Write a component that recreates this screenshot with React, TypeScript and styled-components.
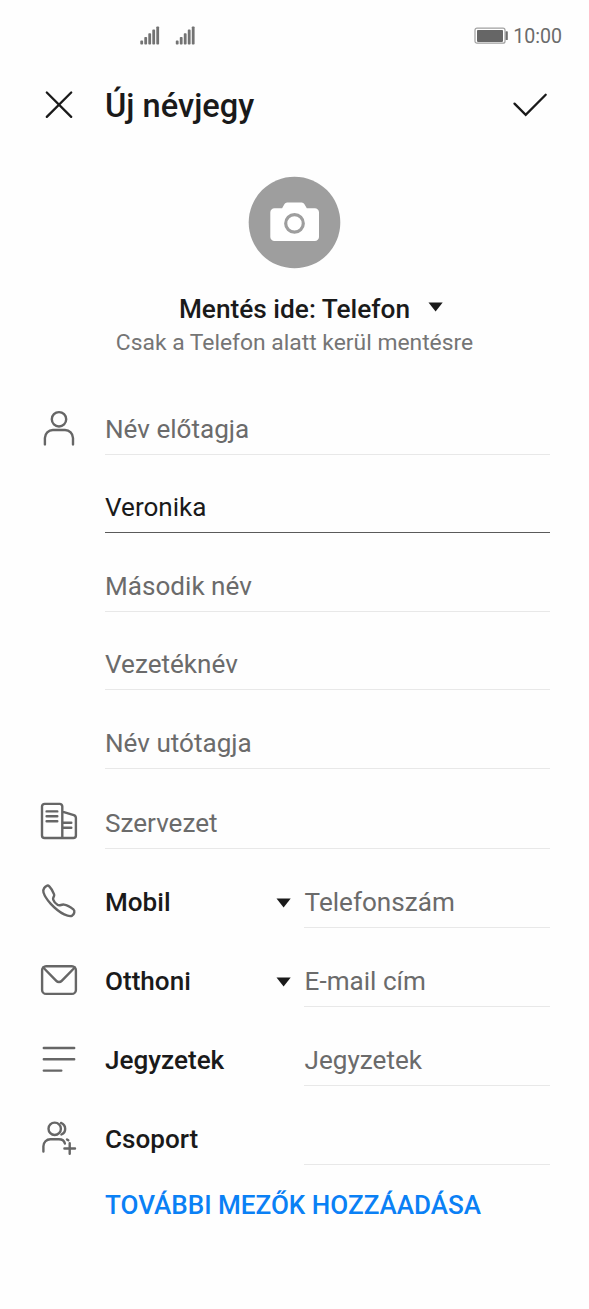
import React from "react";
import styled, { createGlobalStyle } from "styled-components";

const GlobalStyle = createGlobalStyle`
  * { box-sizing: border-box; }
  body { margin: 0; background: #fefefe; }
`;

const Screen = styled.main`
  display: flex;
  flex-direction: column;
  width: 589px;
  height: 1309px;
  background: #fefefe;
  color: #1a1a1a;
  font-family: Roboto, "Liberation Sans", sans-serif;
  overflow: hidden;
`;

const StatusBar = styled.div`
  display: flex;
  align-items: center;
  justify-content: space-between;
  height: 72px;
  padding: 0 27px 0 140px;
`;

const StatusRight = styled.div`
  display: flex;
  align-items: center;
  gap: 5px;
`;

const Clock = styled.span`
  padding-top: 1px;
  font-size: 19.6px;
  line-height: 24px;
  color: #6b6b6b;
`;

const Header = styled.header`
  display: flex;
  align-items: center;
  height: 66px;
  padding: 0 39px 0 39px;
`;

const IconButton = styled.button`
  display: flex;
  width: 40px;
  height: 40px;
  padding: 0;
  border: 0;
  background: none;
  color: #1a1a1a;
`;

const Title = styled.h1`
  flex: 1;
  margin: 0 0 0 26px;
  padding-top: 2px;
  font-size: 32.6px;
  font-weight: 500;
  line-height: 38px;
`;

const Profile = styled.section`
  display: flex;
  flex-direction: column;
  align-items: center;
  height: 238px;
  padding-top: 38px;
`;

const SaveTarget = styled.div`
  display: flex;
  align-items: center;
  gap: 18px;
  margin: 25px 0 0 33px;
  font-size: 26.25px;
  font-weight: 500;
  line-height: 30px;

  svg {
    margin-bottom: 4px;
  }
`;

const Hint = styled.p`
  margin: 5px 0 0;
  font-size: 22.85px;
  line-height: 27px;
  color: #757575;
`;

const Row = styled.div<{ $height: number }>`
  display: flex;
  align-items: flex-end;
  height: ${(p) => p.$height}px;
  padding: 0 39px;
`;

const IconSlot = styled.div`
  flex: none;
  width: 66px;
  height: 47px;
  color: #666;
`;

const Label = styled.div`
  display: flex;
  align-items: center;
  justify-content: space-between;
  flex: none;
  width: 199px;
  padding: 0 13px 11px 0;
  font-size: 26.1px;
  font-weight: 500;
  line-height: 30px;

  svg {
    margin-top: 2px;
  }
`;

const Field = styled.div<{ $active?: boolean; $filled?: boolean; $inset?: boolean }>`
  flex: 1;
  height: 46px;
  padding-top: 5px;
  padding-left: ${(p) => (p.$inset ? 0.6 : 0)}px;
  border-bottom: 1px solid ${(p) => (p.$active ? "#5a5a5a" : "#e8e8e8")};
  font-size: 26.1px;
  line-height: 30px;
  color: ${(p) => (p.$filled ? "#1a1a1a" : "#6b6b6b")};
`;

const MoreButton = styled.button`
  align-self: flex-start;
  margin: 25px 0 0 105px;
  padding: 0;
  border: 0;
  background: none;
  font-family: inherit;
  font-size: 26.05px;
  font-weight: 500;
  line-height: 30px;
  color: #0a80f5;
`;

const LineIcon = ({ children }: { children: React.ReactNode }) => (
  <svg width="40" height="40" viewBox="0 0 40 40" fill="none" stroke="currentColor" strokeWidth="2.4" strokeLinecap="round" strokeLinejoin="round" display="block">
    {children}
  </svg>
);

const PersonIcon = () => (
  <LineIcon>
    <circle cx="20" cy="11.3" r="7.2" />
    <path d="M5.9 36.4V30a8 8 0 0 1 8-8h12.1a8 8 0 0 1 8 8v6.4" />
  </LineIcon>
);

const BuildingIcon = () => (
  <LineIcon>
    <path d="M23.3 36H5.6a2.6 2.6 0 0 1-2.6-2.6V4.5a2.6 2.6 0 0 1 2.6-2.6h15.1a2.6 2.6 0 0 1 2.6 2.6V36h11a2.6 2.6 0 0 0 2.6-2.6V16a3 3 0 0 0-2.1-2.9L23.3 9.6" />
    <path d="M7.6 9.4h10.7M7.6 14.3h10.7M7.6 19.2h10.7M24 20.8h8.3M24 25.8h8.3" />
  </LineIcon>
);

const PhoneIcon = () => (
  <LineIcon>
    <path d="M5.2 7C6.7 4.8 8.7 3.8 10.3 5.3C12.2 7.2 14.2 10.9 15.1 13.3C15.8 15.4 13.4 16.4 14.2 18.6C14.9 20.7 16.8 22.9 18.8 24C20.9 25.1 22.3 23.2 25 23.6C28.1 24.1 31.6 26.2 34.4 28.4C36.3 30 35.2 33.3 33.2 34.6C31 35.9 28.1 34.7 25.2 33.4C20.5 31.2 15.6 27 11.8 22.9C8.7 19.5 5.6 15 4.5 11.5C4 9.8 4.2 8.4 5.2 7Z" />
  </LineIcon>
);

const MailIcon = () => (
  <LineIcon>
    <rect x="3.1" y="6.3" width="33.8" height="27.6" rx="4" />
    <path d="M4.2 7.5L17.3 20.9a3.7 3.7 0 0 0 5.4 0L35.8 7.5" />
  </LineIcon>
);

const NotesIcon = () => (
  <LineIcon>
    <path d="M4.800 9h30.400M4.800 20.300h30.400M4.800 31.600h17.500" />
  </LineIcon>
);

const GroupIcon = () => (
  <LineIcon>
    <circle cx="15.7" cy="10.8" r="6.2" />
    <path d="M22 4.9c5.4 2.3 5.6 9.3.4 11.6M4.4 33.5V28.200a7 7 0 0 1 7-7h8.500c3.600 0 5.400 1.600 6 4.300M28 21.500l1.300.8M30.700 25.200v10.600M25.400 30.500h10.600" />
  </LineIcon>
);

const SignalIcons = () => (
  <svg width="58" height="20" viewBox="0 0 58 20" fill="#737373">
    {[0, 35.5].map((x) =>
      [4, 7.6, 11.3, 15, 18.2].map((h, i) => (
        <rect key={`${x}-${i}`} x={x + 0.3 + i * 4} y={18.6 - h} width="2.8" height={h} rx="0.8" />
      )),
    )}
  </svg>
);

const BatteryIcon = () => (
  <svg width="34" height="18" viewBox="0 0 34 18">
    <rect x="1" y="1.200" width="30" height="15" rx="2" fill="#fff" stroke="#a0a0a0" strokeWidth="1.200" />
    <rect x="3" y="2.900" width="26" height="12" rx="0.800" fill="#666" />
    <rect x="31.600" y="4.300" width="2.200" height="8.800" rx="0.700" fill="#6e6e6e" />
  </svg>
);

const CameraAvatar = () => (
  <svg width="93" height="93" viewBox="0 0 93 93" display="block">
    <circle cx="46.500" cy="46.500" r="45.800" fill="#9e9e9e" />
    <path fill="#fff" d="M26.500 32.200h7.600l2.400-4.200a3 3 0 0 1 2.600-1.600h14.600a3 3 0 0 1 2.600 1.600l2.500 4.200h8a4.200 4.200 0 0 1 4.200 4.200v24.500a4.200 4.200 0 0 1-4.200 4.200H26.500a4.200 4.200 0 0 1-4.200-4.200V36.400a4.200 4.200 0 0 1 4.200-4.200z" />
    <circle cx="46.500" cy="47.400" r="8.800" fill="none" stroke="#9e9e9e" strokeWidth="3.200" />
  </svg>
);

const Caret = () => (
  <svg width="15" height="10" viewBox="0 0 15 10" fill="#1a1a1a" display="block">
    <path d="M0.500 0.500h14.200L7.600 9.500z" />
  </svg>
);

type FieldRow = {
  height: number;
  icon?: React.ReactNode;
  label?: string;
  dropdown?: boolean;
  text: string;
  filled?: boolean;
};

const rows: FieldRow[] = [
  { height: 79, icon: <PersonIcon />, text: "Név előtagja" },
  { height: 78, text: "Veronika", filled: true },
  { height: 79, text: "Második név" },
  { height: 78, text: "Vezetéknév" },
  { height: 79, text: "Név utótagja" },
  { height: 80, icon: <BuildingIcon />, text: "Szervezet" },
  { height: 79, icon: <PhoneIcon />, label: "Mobil", dropdown: true, text: "Telefonszám" },
  { height: 79, icon: <MailIcon />, label: "Otthoni", dropdown: true, text: "E-mail cím" },
  { height: 79, icon: <NotesIcon />, label: "Jegyzetek", text: "Jegyzetek" },
  { height: 79, icon: <GroupIcon />, label: "Csoport", text: "" },
];

export default function App() {
  return (
    <>
      <GlobalStyle />
      <Screen>
        <StatusBar>
          <SignalIcons />
          <StatusRight>
            <BatteryIcon />
            <Clock>10:00</Clock>
          </StatusRight>
        </StatusBar>
        <Header>
          <IconButton aria-label="Mégse">
            <svg width="40" height="40" viewBox="0 0 40 40" fill="none" stroke="currentColor" strokeWidth="2.300" strokeLinecap="round">
              <path d="M7.800 7.500l24.400 24.400M32.200 7.500L7.800 31.900" />
            </svg>
          </IconButton>
          <Title>Új névjegy</Title>
          <IconButton aria-label="Mentés">
            <svg width="40" height="40" viewBox="0 0 40 40" fill="none" stroke="currentColor" strokeWidth="2.300" strokeLinecap="round">
              <path d="M4.500 18.600l11.200 11.200L35.700 9.800" />
            </svg>
          </IconButton>
        </Header>
        <Profile>
          <CameraAvatar />
          <SaveTarget>
            Mentés ide: Telefon
            <Caret />
          </SaveTarget>
          <Hint>Csak a Telefon alatt kerül mentésre</Hint>
        </Profile>
        {rows.map((row, i) => (
          <Row key={i} $height={row.height}>
            <IconSlot>{row.icon}</IconSlot>
            {row.label && (
              <Label>
                {row.label}
                {row.dropdown && <Caret />}
              </Label>
            )}
            <Field $active={row.filled} $filled={row.filled} $inset={!!row.label}>
              {row.text}
            </Field>
          </Row>
        ))}
        <MoreButton>TOVÁBBI MEZŐK HOZZÁADÁSA</MoreButton>
      </Screen>
    </>
  );
}
